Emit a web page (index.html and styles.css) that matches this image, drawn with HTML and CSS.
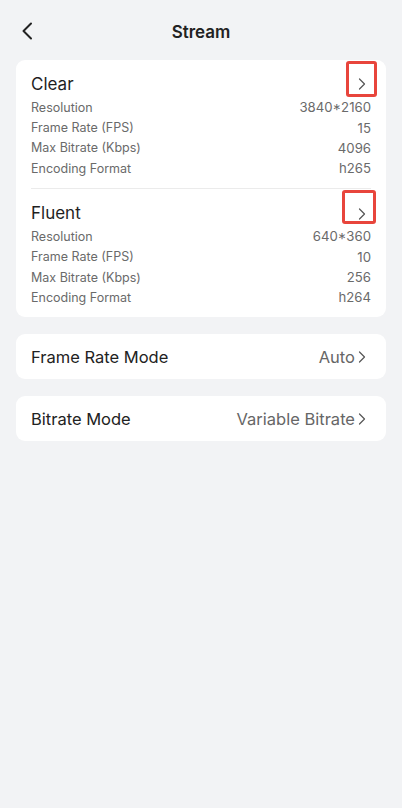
FILE: index.html
```html
<!DOCTYPE html>
<html lang="en">
<head>
<meta charset="utf-8">
<title>Stream</title>
<link rel="stylesheet" href="styles.css">
</head>
<body>
<div class="page">
  <header class="nav">
    <span class="back">
      <svg width="12" height="18" viewBox="0 0 12 18"><path d="M10 1.5 L2.5 9 L10 16.5" fill="none" stroke="#222" stroke-width="2" stroke-linecap="round" stroke-linejoin="round"/></svg>
    </span>
    <h1 class="title">Stream</h1>
  </header>

  <section class="card streams">
    <div class="stream">
      <div class="stream-head">
        <span class="stream-name">Clear</span>
        <span class="chev-wrap">
          <svg class="chev" width="8" height="12" viewBox="0 0 8 12"><path d="M1.5 1 L6.5 6 L1.5 11" fill="none" stroke="#555" stroke-width="1.2" stroke-linecap="round" stroke-linejoin="round"/></svg>
          <span class="mark mark-a"></span>
        </span>
      </div>
      <div class="row"><span>Resolution</span><span class="val">3840*2160</span></div>
      <div class="row"><span>Frame Rate (FPS)</span><span class="val">15</span></div>
      <div class="row"><span>Max Bitrate (Kbps)</span><span class="val">4096</span></div>
      <div class="row"><span>Encoding Format</span><span class="val">h265</span></div>
    </div>
    <div class="divider"></div>
    <div class="stream">
      <div class="stream-head">
        <span class="stream-name">Fluent</span>
        <span class="chev-wrap">
          <svg class="chev chev-b" width="8" height="12" viewBox="0 0 8 12"><path d="M1.5 1 L6.5 6 L1.5 11" fill="none" stroke="#555" stroke-width="1.2" stroke-linecap="round" stroke-linejoin="round"/></svg>
          <span class="mark mark-b"></span>
        </span>
      </div>
      <div class="row"><span>Resolution</span><span class="val">640*360</span></div>
      <div class="row"><span>Frame Rate (FPS)</span><span class="val">10</span></div>
      <div class="row"><span>Max Bitrate (Kbps)</span><span class="val">256</span></div>
      <div class="row"><span>Encoding Format</span><span class="val">h264</span></div>
    </div>
  </section>

  <section class="card item">
    <span class="item-label">Frame Rate Mode</span>
    <span class="item-value">Auto<svg class="chev" width="8" height="12" viewBox="0 0 8 12"><path d="M1.5 1 L6.5 6 L1.5 11" fill="none" stroke="#555" stroke-width="1.2" stroke-linecap="round" stroke-linejoin="round"/></svg></span>
  </section>

  <section class="card item">
    <span class="item-label">Bitrate Mode</span>
    <span class="item-value">Variable Bitrate<svg class="chev" width="8" height="12" viewBox="0 0 8 12"><path d="M1.5 1 L6.5 6 L1.5 11" fill="none" stroke="#555" stroke-width="1.2" stroke-linecap="round" stroke-linejoin="round"/></svg></span>
  </section>
</div>
</body>
</html>
```

FILE: styles.css
```css
* { box-sizing: border-box; }
html, body {
  margin: 0;
  padding: 0;
  background: #f2f3f5;
  font-family: Inter, "Noto Sans", sans-serif;
  color: #222;
}
.page {
  width: 402px;
  min-height: 808px;
  padding: 0 16px;
  display: flex;
  flex-direction: column;
}
.nav {
  height: 60px;
  display: flex;
  align-items: center;
  justify-content: center;
  position: relative;
}
.back {
  position: absolute;
  left: 5px;
  top: 22px;
  display: flex;
}
.title {
  margin: 0;
  font-size: 17px;
  font-weight: 600;
  color: #222;
  padding-top: 3px;
}
.card {
  background: #fff;
  border-radius: 9px;
  padding: 0 15px;
}
.stream { padding: 10px 0 9.5px; }
.stream-head {
  height: 27px;
  display: flex;
  align-items: center;
  justify-content: space-between;
}
.stream-name {
  font-size: 17px;
  color: #1f1f1f;
}
.chev-wrap {
  position: relative;
  display: flex;
  align-items: center;
  margin-right: 5px;
}
.chev { display: block; }
.chev-b { margin-top: 2px; }
.mark {
  position: absolute;
  border: 3px solid #e8453c;
  border-radius: 3px;
}
.mark-a {
  left: -12px;
  top: -17px;
  width: 31px;
  height: 36px;
}
.mark-b {
  left: -16px;
  top: -16px;
  width: 34px;
  height: 34px;
}
.row {
  height: 20.4px;
  display: flex;
  align-items: center;
  justify-content: space-between;
  font-size: 12.5px;
  color: #6a6a6a;
}
.row .val { font-size: 13.2px; }
.divider {
  height: 1px;
  background: #ebebeb;
}
.item {
  margin-top: 17px;
  height: 45px;
  display: flex;
  align-items: center;
  justify-content: space-between;
}
.item-label {
  font-size: 16.5px;
  color: #222;
}
.item-value {
  display: flex;
  align-items: center;
  gap: 3px;
  font-size: 16.5px;
  color: #666;
  margin-right: 5px;
}
```
